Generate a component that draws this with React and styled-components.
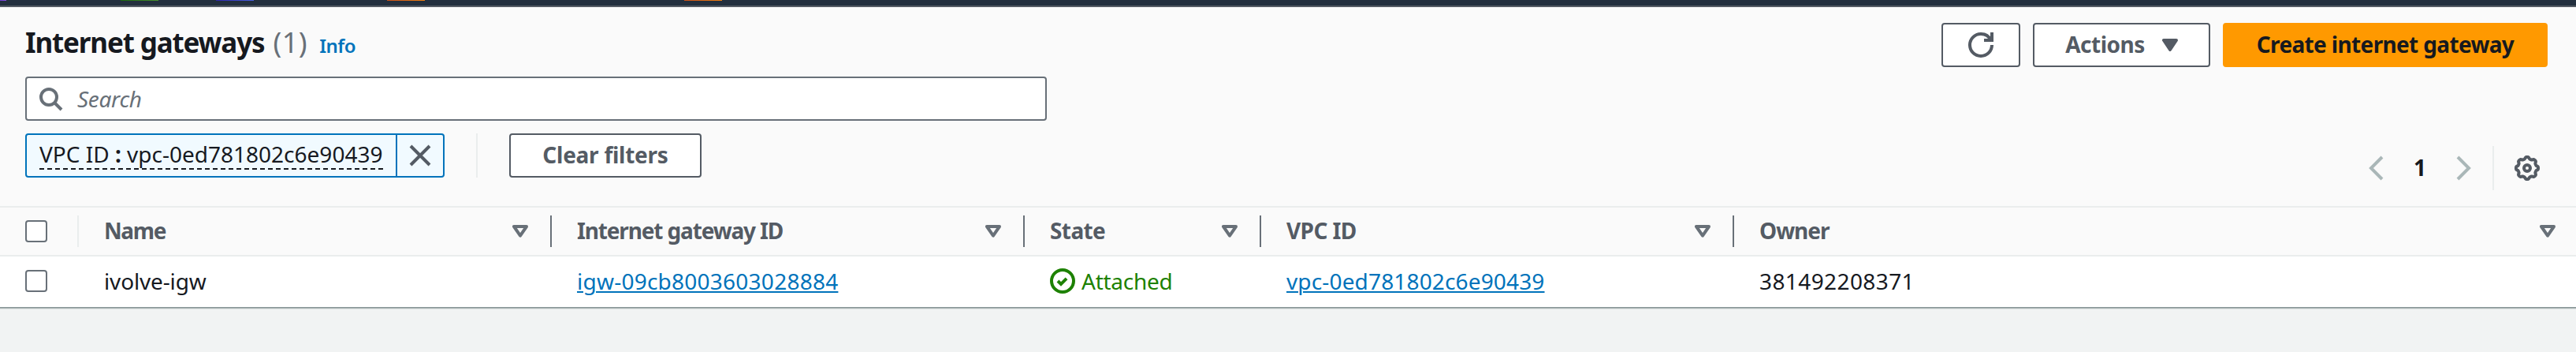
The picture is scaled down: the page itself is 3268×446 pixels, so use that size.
import React from "react";
import styled, { createGlobalStyle } from "styled-components";

const Global = createGlobalStyle`
  * { box-sizing: border-box; }
  html, body { margin: 0; background: #f2f3f3; }
  body {
    font-family: "Noto Sans", "Open Sans", sans-serif;
    font-size: 28px;
    line-height: 40px;
    color: #16191f;
    overflow: hidden;
  }
`;

const Page = styled.div`
  width: 3268px;
  height: 446px;
  background: #f1f3f3;
`;

const TopBar = styled.div`
  height: 9px;
  display: flex;
  background: #232f3e;
  border-bottom: 2px solid #545b64;
`;

const ServiceChip = styled.span`
  height: 1px;
  width: ${(p) => p.$width}px;
  margin-left: ${(p) => p.$gap}px;
  background: linear-gradient(90deg, ${(p) => p.$from}, ${(p) => p.$to});
`;

const Panel = styled.main`
  background: #fafafa;
  box-shadow: 0 1px 0 #879596, 0 2px 0 #a9b3b4, 0 3px 0 #dfe3e3;
`;

const PanelHeader = styled.header`
  height: 88px;
  padding: 20px 36px 0 32px;
  display: flex;
  justify-content: space-between;
  align-items: flex-start;
`;

const Heading = styled.div`
  display: flex;
  align-items: baseline;
  height: 56px;
  line-height: 50px;
`;

const Title = styled.h1`
  margin: 0;
  font-size: 35px;
  font-weight: 700;
  letter-spacing: -1.15px;
`;

const Counter = styled.span`
  margin-left: 11px;
  font-size: 36px;
  letter-spacing: 0.5px;
  color: #687078;
`;

const InfoLink = styled.a`
  margin-left: 15px;
  font-size: 24px;
  font-weight: 600;
  letter-spacing: -0.5px;
  color: #0073bb;
`;

const ButtonGroup = styled.div`
  display: flex;
  gap: 16px;
`;

const Button = styled.button`
  width: ${(p) => p.$width}px;
  height: 56px;
  padding: 0;
  display: flex;
  align-items: center;
  justify-content: center;
  gap: 22px;
  font: inherit;
  font-weight: 700;
  letter-spacing: ${(p) => p.$track || 0}px;
  white-space: nowrap;
  color: ${(p) => (p.$primary ? "#16191f" : "#545b64")};
  background: ${(p) => (p.$primary ? "#ff9900" : "#ffffff")};
  border: 2px solid ${(p) => (p.$primary ? "#ff9900" : "#545b64")};
  border-radius: 4px;
`;

const ButtonLabel = styled.span`
  padding-bottom: 3px;
`;

const SearchBox = styled.div`
  width: 1296px;
  height: 56px;
  margin-left: 32px;
  padding-left: 14px;
  display: flex;
  align-items: center;
  gap: 18px;
  color: #687078;
  background: #fff;
  border: 2px solid #687078;
  border-radius: 4px;
`;

const Placeholder = styled.span`
  padding-bottom: 1px;
  font-style: italic;
  letter-spacing: -0.3px;
`;

const FilterRow = styled.div`
  height: 108px;
  padding: 16px 46px 0 32px;
  display: flex;
  align-items: flex-start;
`;

const Token = styled.div`
  width: 532px;
  height: 56px;
  display: flex;
  background: #f1faff;
  border: 2px solid #0073bb;
  border-radius: 4px;
`;

const TokenLabel = styled.div`
  flex: 1;
  padding: 4px 0 0 16px;
`;

const TokenText = styled.div`
  width: 436px;
  height: 40px;
  white-space: nowrap;
  border-bottom: 2px dashed #16191f;
`;

const TokenDismiss = styled.div`
  width: 60px;
  display: flex;
  align-items: center;
  justify-content: center;
  color: #545b64;
  border-left: 2px solid #0073bb;
`;

const Divider = styled.span`
  width: 2px;
  height: 56px;
  margin: 0 ${(p) => p.$right}px 0 ${(p) => p.$left}px;
  background: #eaeded;
`;

const Pagination = styled.nav`
  margin: 16px 0 0 auto;
  height: 56px;
  display: flex;
  align-items: center;
`;

const PageNumber = styled.span`
  width: 76px;
  padding-bottom: 3px;
  text-align: center;
  font-weight: 700;
`;

const Row = styled.div`
  display: grid;
  grid-template-columns: 100px 600px 600px 300px 600px 1fr;
  height: 64px;
  background: ${(p) => (p.$head ? "#fafafa" : "#ffffff")};
  ${(p) => p.$head && "border-top: 2px solid #eaeded; border-bottom: 2px solid #eaeded;"}
`;

const Cell = styled.div`
  display: flex;
  align-items: center;
  gap: 8px;
  padding: 0 0 2px 32px;
  white-space: nowrap;
  letter-spacing: ${(p) => p.$track || 0}px;
`;

const HeadCell = styled.div`
  height: 40px;
  margin-top: 10px;
  padding: 0 ${(p) => (p.$last ? 26 : p.$select ? 38 : 28)}px 0 32px;
  display: flex;
  align-items: center;
  justify-content: space-between;
  font-weight: 700;
  color: #545b64;
  border-right: ${(p) => (p.$last ? "none" : `2px solid ${p.$select ? "#eaeded" : "#687078"}`)};
`;

const HeadLabel = styled.span`
  padding-bottom: 3px;
  white-space: nowrap;
  letter-spacing: ${(p) => p.$track}px;
`;

const Checkbox = styled.span`
  flex: none;
  width: 28px;
  height: 28px;
  background: #fff;
  border: 2px solid #687078;
  border-radius: 4px;
`;

const Link = styled.a`
  color: #0073bb;
  text-decoration: underline;
  text-decoration-thickness: 2px;
  text-underline-offset: 2px;
  text-decoration-skip-ink: auto;
`;

const Status = styled.span`
  color: #1d8102;
`;

const Svg = styled.svg`
  flex: none;
  display: block;
  fill: none;
  stroke: ${(p) => p.$color || "currentColor"};
  stroke-width: 2;
`;

const Icon = ({ color, size = 32, children }) => (
  <Svg $color={color} width={size} height={size} viewBox="0 0 16 16">{children}</Svg>
);

const SortIcon = () => (
  <Svg width="20" height="16" viewBox="0 0 10 8" $color="#687078">
    <path d="M1 1h8L5 6.8z" strokeLinejoin="round" />
  </Svg>
);

// Scalloped outline with eight teeth around the hub.
const gearPath = Array.from({ length: 96 }, (_, i) => {
  const a = (i / 96) * Math.PI * 2;
  const r = 6.45 + 0.6 * Math.tanh(2 * Math.cos(8 * a));
  return `${i ? "L" : "M"}${(8 + r * Math.cos(a)).toFixed(2)} ${(8 + r * Math.sin(a)).toFixed(2)}`;
}).join("") + "z";

const columns = [
  { label: "Name", track: -1.4 },
  { label: "Internet gateway ID", track: -1.15 },
  { label: "State", track: -0.6 },
  { label: "VPC ID", track: -0.6 },
  { label: "Owner", track: -1, last: true },
];

export default function App() {
  return (
    <Page>
      <Global />
      <TopBar>
        <ServiceChip $gap={0} $width={8} $from="#6b3fd0" $to="#8a4fe0" />
        <ServiceChip $gap={145} $width={48} $from="#1b660f" $to="#4a9030" />
        <ServiceChip $gap={73} $width={48} $from="#2e27ad" $to="#4a60dd" />
        <ServiceChip $gap={169} $width={48} $from="#c8511b" $to="#ec7f12" />
        <ServiceChip $gap={329} $width={48} $from="#c8511b" $to="#ec7f12" />
      </TopBar>
      <Panel>
        <PanelHeader>
          <Heading>
            <Title>Internet gateways</Title>
            <Counter>(1)</Counter>
            <InfoLink>Info</InfoLink>
          </Heading>
          <ButtonGroup>
            <Button $width={100} aria-label="Refresh">
              <Icon>
                <path d="M10 5h5V0" />
                <path d="M15 8a6.957 6.957 0 0 1-7 7 6.957 6.957 0 0 1-7-7 6.957 6.957 0 0 1 7-7 6.87 6.87 0 0 1 6.3 4" />
              </Icon>
            </Button>
            <Button $width={225} $track={-0.5}>
              <ButtonLabel>Actions</ButtonLabel>
              <Svg width="20" height="16" viewBox="0 0 10 8">
                <path d="M1 1h8L5 7z" fill="currentColor" strokeLinejoin="round" />
              </Svg>
            </Button>
            <Button $width={412} $primary $track={-0.65}>
              <ButtonLabel>Create internet gateway</ButtonLabel>
            </Button>
          </ButtonGroup>
        </PanelHeader>
        <SearchBox>
          <Icon>
            <circle cx="7" cy="7" r="5" />
            <path d="m15 15-4.5-4.5" />
          </Icon>
          <Placeholder>Search</Placeholder>
        </SearchBox>
        <FilterRow>
          <Token>
            <TokenLabel>
              <TokenText>VPC ID <b>:</b> vpc-0ed781802c6e90439</TokenText>
            </TokenLabel>
            <TokenDismiss>
              <Icon><path d="m2 2 12 12M14 2 2 14" /></Icon>
            </TokenDismiss>
          </Token>
          <Divider $left={40} $right={40} />
          <Button $width={244} $track={-0.25}>
            <ButtonLabel>Clear filters</ButtonLabel>
          </Button>
          <Pagination>
            <Icon color="#aab7b8"><path d="M11 1 4 8l7 7" /></Icon>
            <PageNumber>1</PageNumber>
            <Icon color="#aab7b8"><path d="m5 1 7 7-7 7" /></Icon>
            <Divider $left={22} $right={26} />
            <Icon color="#545b64">
              <path d={gearPath} strokeLinejoin="round" />
              <circle cx="8" cy="8" r="2" />
            </Icon>
          </Pagination>
        </FilterRow>
        <Row $head>
          <HeadCell $select><Checkbox /></HeadCell>
          {columns.map((c) => (
            <HeadCell key={c.label} $last={c.last}>
              <HeadLabel $track={c.track}>{c.label}</HeadLabel>
              <SortIcon />
            </HeadCell>
          ))}
        </Row>
        <Row>
          <Cell><Checkbox /></Cell>
          <Cell $track={-0.15}>ivolve-igw</Cell>
          <Cell $track={0.24}><Link>igw-09cb8003603028884</Link></Cell>
          <Cell $track={-0.25}>
            <Icon color="#1d8102">
              <circle cx="8" cy="8" r="7" />
              <path d="m5 8 2 2 3.521-3.521" />
            </Icon>
            <Status>Attached</Status>
          </Cell>
          <Cell $track={0.15}><Link>vpc-0ed781802c6e90439</Link></Cell>
          <Cell $track={0.4}>381492208371</Cell>
        </Row>
      </Panel>
    </Page>
  );
}
